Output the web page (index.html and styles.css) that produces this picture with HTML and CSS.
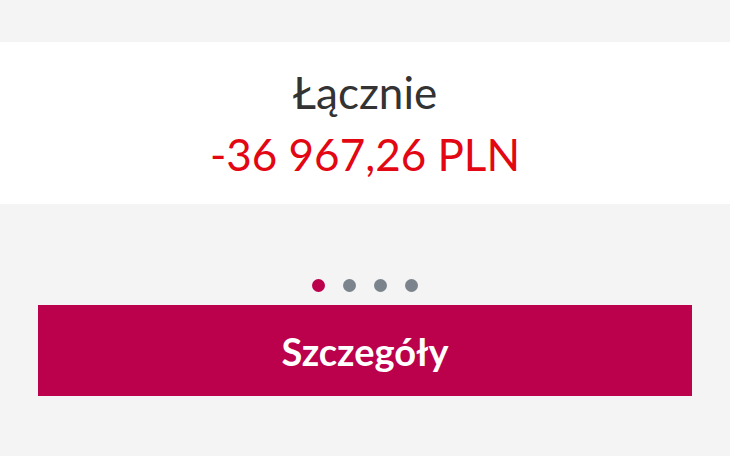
FILE: index.html
```html
<!DOCTYPE html>
<html lang="pl">
<head>
    <meta charset="UTF-8">
    <meta name="viewport" content="width=device-width, initial-scale=1.0">
    <title>Łącznie</title>
    <link rel="stylesheet" href="styles.css">
</head>
<body>

    <!-- Podsumowanie salda -->
    <div class="summary">
        <div class="summary-label">Łącznie</div>
        <div class="summary-amount">-36 967,26 PLN</div>
    </div>

    <!-- Kropki karuzeli -->
    <div class="dots">
        <span class="dot active"></span>
        <span class="dot"></span>
        <span class="dot"></span>
        <span class="dot"></span>
    </div>

    <button class="details-button">Szczegóły</button>

</body>
</html>
```

FILE: styles.css
```css
body {
    margin: 0;
    padding-top: 42px;
    font-family: Lato, "Open Sans", sans-serif;
    background-color: #f4f4f4;
    color: #333;
}
.summary {
    background-color: #fff;
    height: 162px;
    display: flex;
    flex-direction: column;
    align-items: center;
    justify-content: center;
    gap: 10px;
}
.summary-label {
    font-size: 44px;
    line-height: 52px;
    color: #333;
}
.summary-amount {
    font-size: 44px;
    line-height: 52px;
    color: #e30613; /* czerwony */
}
.dots {
    display: flex;
    justify-content: center;
    gap: 18px;
    margin-top: 75px;
    height: 13px;
}
.dot {
    width: 13px;
    height: 13px;
    border-radius: 50%;
    background-color: #7b848c;
}
.dot.active {
    background-color: #bb004c;
}
.details-button {
    display: block;
    width: 654px;
    height: 91px;
    margin: 13px 0 0 38px;
    border: none;
    background-color: #bb004c;
    color: #fff;
    font-family: Lato, "Open Sans", sans-serif;
    font-size: 38px;
    font-weight: bold;
    cursor: pointer;
}
```
